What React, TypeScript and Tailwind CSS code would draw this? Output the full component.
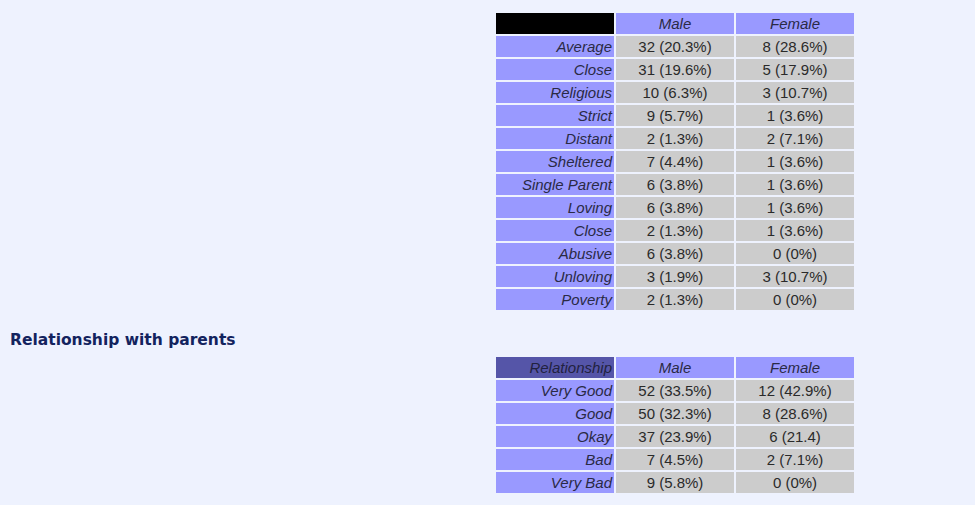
import React from "react";

const t1: [string, string, string][] = [
  ["Average", "32 (20.3%)", "8 (28.6%)"],
  ["Close", "31 (19.6%)", "5 (17.9%)"],
  ["Religious", "10 (6.3%)", "3 (10.7%)"],
  ["Strict", "9 (5.7%)", "1 (3.6%)"],
  ["Distant", "2 (1.3%)", "2 (7.1%)"],
  ["Sheltered", "7 (4.4%)", "1 (3.6%)"],
  ["Single Parent", "6 (3.8%)", "1 (3.6%)"],
  ["Loving", "6 (3.8%)", "1 (3.6%)"],
  ["Close", "2 (1.3%)", "1 (3.6%)"],
  ["Abusive", "6 (3.8%)", "0 (0%)"],
  ["Unloving", "3 (1.9%)", "3 (10.7%)"],
  ["Poverty", "2 (1.3%)", "0 (0%)"],
];

const t2: [string, string, string][] = [
  ["Very Good", "52 (33.5%)", "12 (42.9%)"],
  ["Good", "50 (32.3%)", "8 (28.6%)"],
  ["Okay", "37 (23.9%)", "6 (21.4)"],
  ["Bad", "7 (4.5%)", "2 (7.1%)"],
  ["Very Bad", "9 (5.8%)", "0 (0%)"],
];

function DataTable({ rows, corner, dark }: { rows: [string, string, string][]; corner: string; dark: boolean }) {
  const cell = "p-0 h-[21px] leading-[21px] text-[15px] overflow-hidden whitespace-nowrap";
  return (
    <table
      className="table-fixed w-[362px] border-separate border-spacing-[2px] ml-[494px]"
      style={{ fontFamily: '"Liberation Sans", Arial, sans-serif' }}
    >
      <colgroup>
        <col className="w-[118px]" />
        <col className="w-[118px]" />
        <col className="w-[118px]" />
      </colgroup>
      <thead>
        <tr>
          <th className={`${cell} font-normal italic text-right pr-[2px] text-[#22223f] ${dark ? "bg-[#5555a8]" : "bg-black"}`}>{corner}</th>
          <th className={`${cell} font-normal italic text-center text-[#2a2a45] bg-[#9999ff]`}>Male</th>
          <th className={`${cell} font-normal italic text-center text-[#2a2a45] bg-[#9999ff]`}>Female</th>
        </tr>
      </thead>
      <tbody>
        {rows.map((r, i) => (
          <tr key={i}>
            <td className={`${cell} italic text-right pr-[2px] text-[#2a2a45] bg-[#9999ff]`}>{r[0]}</td>
            <td className={`${cell} text-center text-[#2a2a2a] bg-[#cccccc]`}>{r[1]}</td>
            <td className={`${cell} text-center text-[#2a2a2a] bg-[#cccccc]`}>{r[2]}</td>
          </tr>
        ))}
      </tbody>
    </table>
  );
}

export default function App() {
  return (
    <div className="w-[975px] h-[505px] bg-[#eef2fe] overflow-hidden pt-[11px] flex flex-col items-start">
      <DataTable rows={t1} corner="" dark={false} />
      <h2
        className="ml-[10px] mt-[19px] mb-[6px] text-[15.5px] leading-[18px] font-bold text-[#13235e]"
        style={{ fontFamily: '"DejaVu Sans", Verdana, sans-serif' }}
      >
        Relationship with parents
      </h2>
      <DataTable rows={t2} corner="Relationship" dark={true} />
    </div>
  );
}
